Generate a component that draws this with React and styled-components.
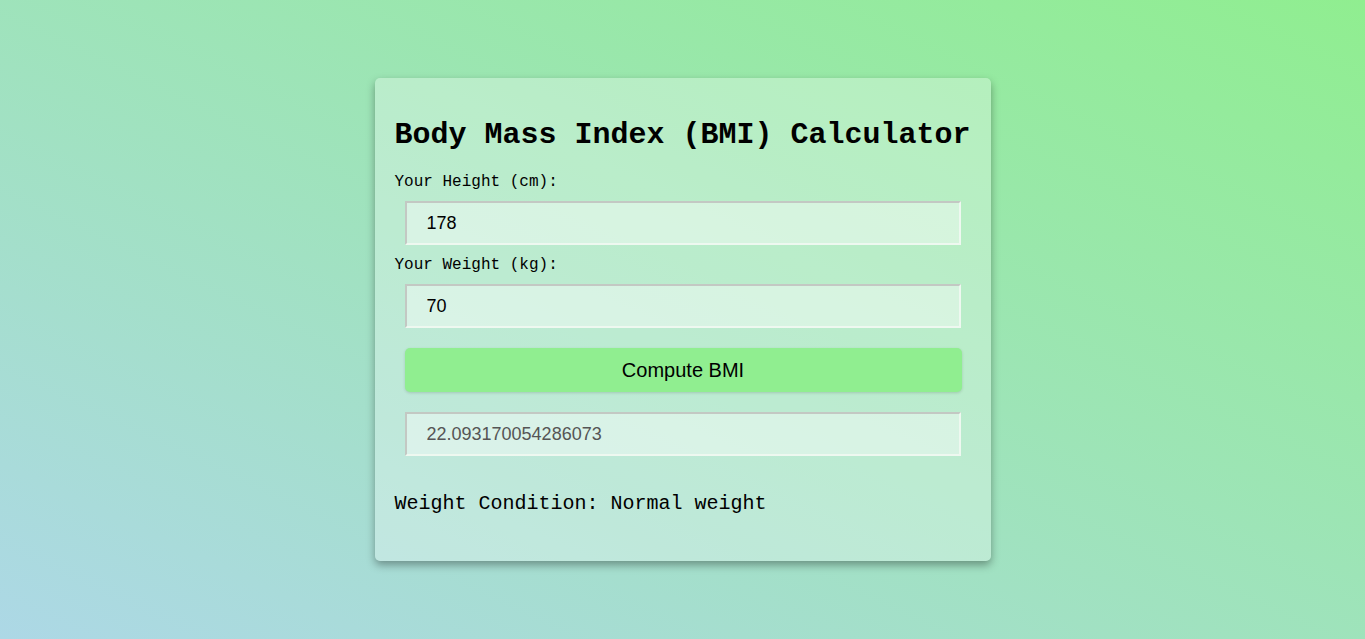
import React from "react";
import styled, { createGlobalStyle } from "styled-components";

const GlobalStyle = createGlobalStyle`
  html, body { margin: 0; padding: 0; }
  body {
    min-height: 100vh;
    background: linear-gradient(to top right, #add8e6, #90ee90);
    font-family: "Liberation Mono", "Courier New", monospace;
  }
  * { box-sizing: border-box; }
`;

const Page = styled.main`
  height: 100vh;
  display: flex;
  align-items: center;
  justify-content: center;
`;

const Card = styled.section`
  width: 616px;
  padding: 20px;
  background: rgba(255, 255, 255, 0.3);
  border-radius: 5px;
  box-shadow: 0 4px 8px rgba(0, 0, 0, 0.35);
  display: flex;
  flex-direction: column;
`;

const Title = styled.h1`
  margin: 20px 0;
  font-family: "Liberation Mono", "Courier New", monospace;
  font-size: 30px;
  line-height: 34px;
  font-weight: bold;
  color: #000;
  white-space: nowrap;
`;

const Label = styled.label`
  display: block;
  font-family: "Liberation Mono", "Courier New", monospace;
  font-size: 16px;
  line-height: 18px;
  color: #000;
  margin-top: ${(p) => p.$top || 0}px;
`;

const Field = styled.input`
  display: block;
  width: 556px;
  height: 44px;
  margin: ${(p) => p.$top}px 10px 0;
  padding: 0 20px;
  font-family: "Liberation Sans", Arial, sans-serif;
  font-size: 18px;
  color: ${(p) => (p.readOnly ? "#555" : "#000")};
  background: rgba(255, 255, 255, 0.42);
  border: 2px solid;
  border-color: #c3c8c3 #eef8f0 #eef8f0 #c3c8c3;
  outline: none;
`;

const Button = styled.button`
  display: block;
  width: 557px;
  height: 44px;
  margin: 20px 10px 0;
  border: none;
  border-radius: 5px;
  background: #90ee90;
  box-shadow: 0 1px 3px rgba(0, 0, 0, 0.15);
  font-family: "Liberation Sans", Arial, sans-serif;
  font-size: 20px;
  color: #000;
  cursor: pointer;
`;

const Condition = styled.p`
  margin: 36px 0 26px;
  font-family: "Liberation Mono", "Courier New", monospace;
  font-size: 20px;
  line-height: 23px;
  color: #000;
`;

export default function App() {
  return (
    <>
      <GlobalStyle />
      <Page>
        <Card>
          <Title>Body Mass Index (BMI) Calculator</Title>
          <Label htmlFor="height" $top={1}>Your Height (cm):</Label>
          <Field id="height" $top={10} defaultValue="178" />
          <Label htmlFor="weight" $top={11}>Your Weight (kg):</Label>
          <Field id="weight" $top={10} defaultValue="70" />
          <Button type="button">Compute BMI</Button>
          <Field $top={20} readOnly value="22.093170054286073" />
          <Condition>Weight Condition: Normal weight</Condition>
        </Card>
      </Page>
    </>
  );
}
